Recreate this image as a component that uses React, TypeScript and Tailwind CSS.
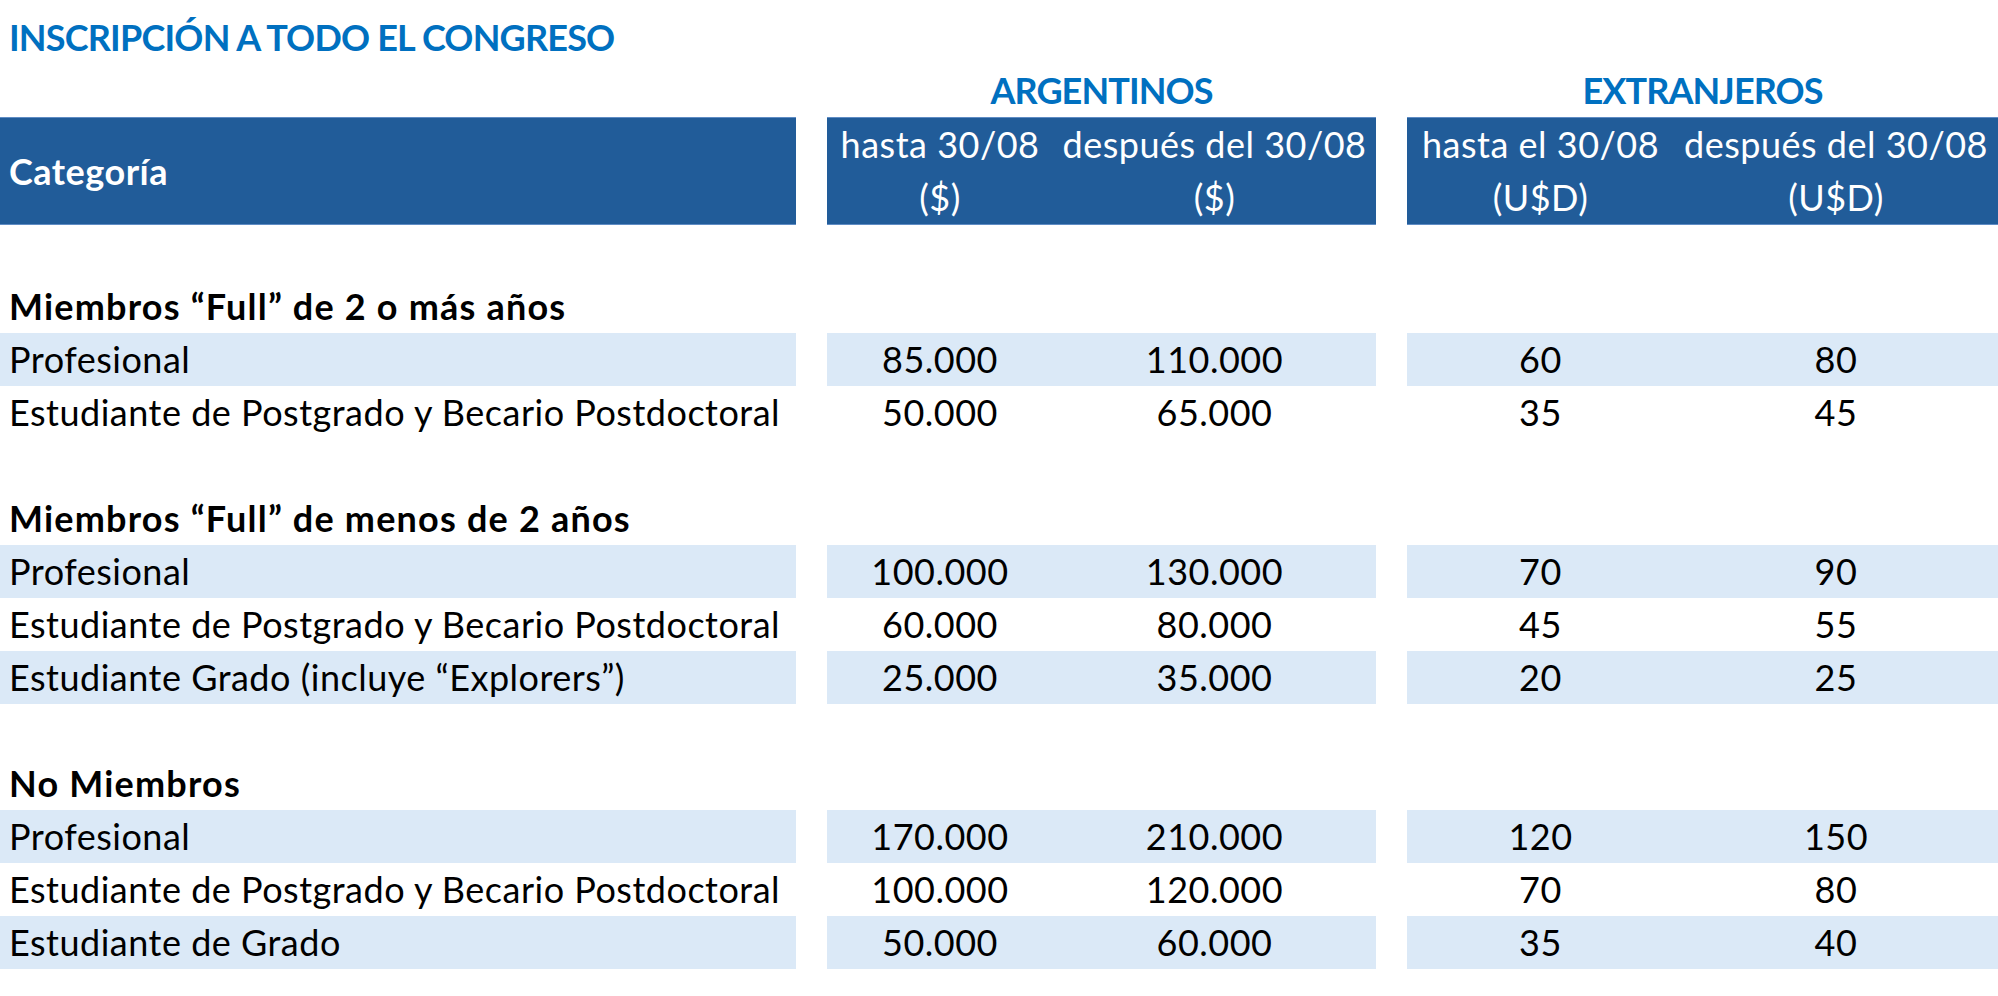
import React from 'react';

type Row = { label: string; values: [string, string, string, string]; shaded: boolean };

type Group = { title: string; rows: Row[] };

const groups: Group[] = [
  {
    title: 'Miembros “Full” de 2 o más años',
    rows: [
      { label: 'Profesional', values: ['85.000', '110.000', '60', '80'], shaded: true },
      { label: 'Estudiante de Postgrado y Becario Postdoctoral', values: ['50.000', '65.000', '35', '45'], shaded: false },
    ],
  },
  {
    title: 'Miembros “Full” de menos de 2 años',
    rows: [
      { label: 'Profesional', values: ['100.000', '130.000', '70', '90'], shaded: true },
      { label: 'Estudiante de Postgrado y Becario Postdoctoral', values: ['60.000', '80.000', '45', '55'], shaded: false },
      { label: 'Estudiante Grado (incluye “Explorers”)', values: ['25.000', '35.000', '20', '25'], shaded: true },
    ],
  },
  {
    title: 'No Miembros',
    rows: [
      { label: 'Profesional', values: ['170.000', '210.000', '120', '150'], shaded: true },
      { label: 'Estudiante de Postgrado y Becario Postdoctoral', values: ['100.000', '120.000', '70', '80'], shaded: false },
      { label: 'Estudiante de Grado', values: ['50.000', '60.000', '35', '40'], shaded: true },
    ],
  },
];

function DataRow({ row }: { row: Row }) {
  const bg = row.shaded ? 'bg-[#dbe9f7]' : 'bg-white';
  return (
    <div className="flex h-[53px] leading-[53px]">
      <div className={`w-[796px] pl-[9px] ${bg}`}>{row.label}</div>
      <div className="w-[31px]" />
      <div className={`flex w-[549px] ${bg}`}>
        <div className="w-[226px] text-center">{row.values[0]}</div>
        <div className="w-[323px] text-center">{row.values[1]}</div>
      </div>
      <div className="w-[31px]" />
      <div className={`flex flex-1 ${bg}`}>
        <div className="w-[267px] text-center">{row.values[2]}</div>
        <div className="flex-1 text-center">{row.values[3]}</div>
      </div>
    </div>
  );
}

function HeaderCell({ top, bottom, className }: { top: string; bottom: string; className: string }) {
  return (
    <div className={`flex flex-col text-center ${className}`}>
      <div className="h-[54px] leading-[53px]">{top}</div>
      <div className="h-[54px] leading-[53px]">{bottom}</div>
    </div>
  );
}

export default function App() {
  return (
    <div
      className="min-h-[996px] bg-white pt-[11px] text-[36px] tracking-[0.5px] text-black"
      style={{ fontFamily: 'Lato, "Noto Sans", sans-serif' }}
    >
      <div className="h-[53px] pl-[9px] font-bold leading-[53px] tracking-[-0.8px] text-[#0070c0]">
        INSCRIPCIÓN A TODO EL CONGRESO
      </div>

      <div className="flex h-[53px] font-bold leading-[53px] tracking-[-0.9px] text-[#0070c0]">
        <div className="w-[827px]" />
        <div className="w-[549px] text-center">ARGENTINOS</div>
        <div className="w-[31px]" />
        <div className="flex-1 text-center">EXTRANJEROS</div>
      </div>

      <div className="flex h-[108px] text-white">
        <div className="flex w-[796px] items-center border-y border-[#5f8cc4] bg-[#215c99] pl-[9px] font-bold">
          Categoría
        </div>
        <div className="w-[31px]" />
        <div className="flex w-[549px] border-y border-[#5f8cc4] bg-[#215c99]">
          <HeaderCell top="hasta 30/08" bottom="($)" className="w-[226px]" />
          <HeaderCell top="después del 30/08" bottom="($)" className="w-[323px]" />
        </div>
        <div className="w-[31px]" />
        <div className="flex flex-1 border-y border-[#5f8cc4] bg-[#215c99]">
          <HeaderCell top="hasta el 30/08" bottom="(U$D)" className="w-[267px]" />
          <HeaderCell top="después del 30/08" bottom="(U$D)" className="flex-1" />
        </div>
      </div>

      <div className="h-[55px]" />

      {groups.map((group, i) => (
        <div key={group.title}>
          {i > 0 && <div className="h-[53px]" />}
          <div className="h-[53px] pl-[9px] font-bold leading-[53px] tracking-[1.2px]">{group.title}</div>
          {group.rows.map((row, j) => (
            <DataRow key={j} row={row} />
          ))}
        </div>
      ))}
    </div>
  );
}
